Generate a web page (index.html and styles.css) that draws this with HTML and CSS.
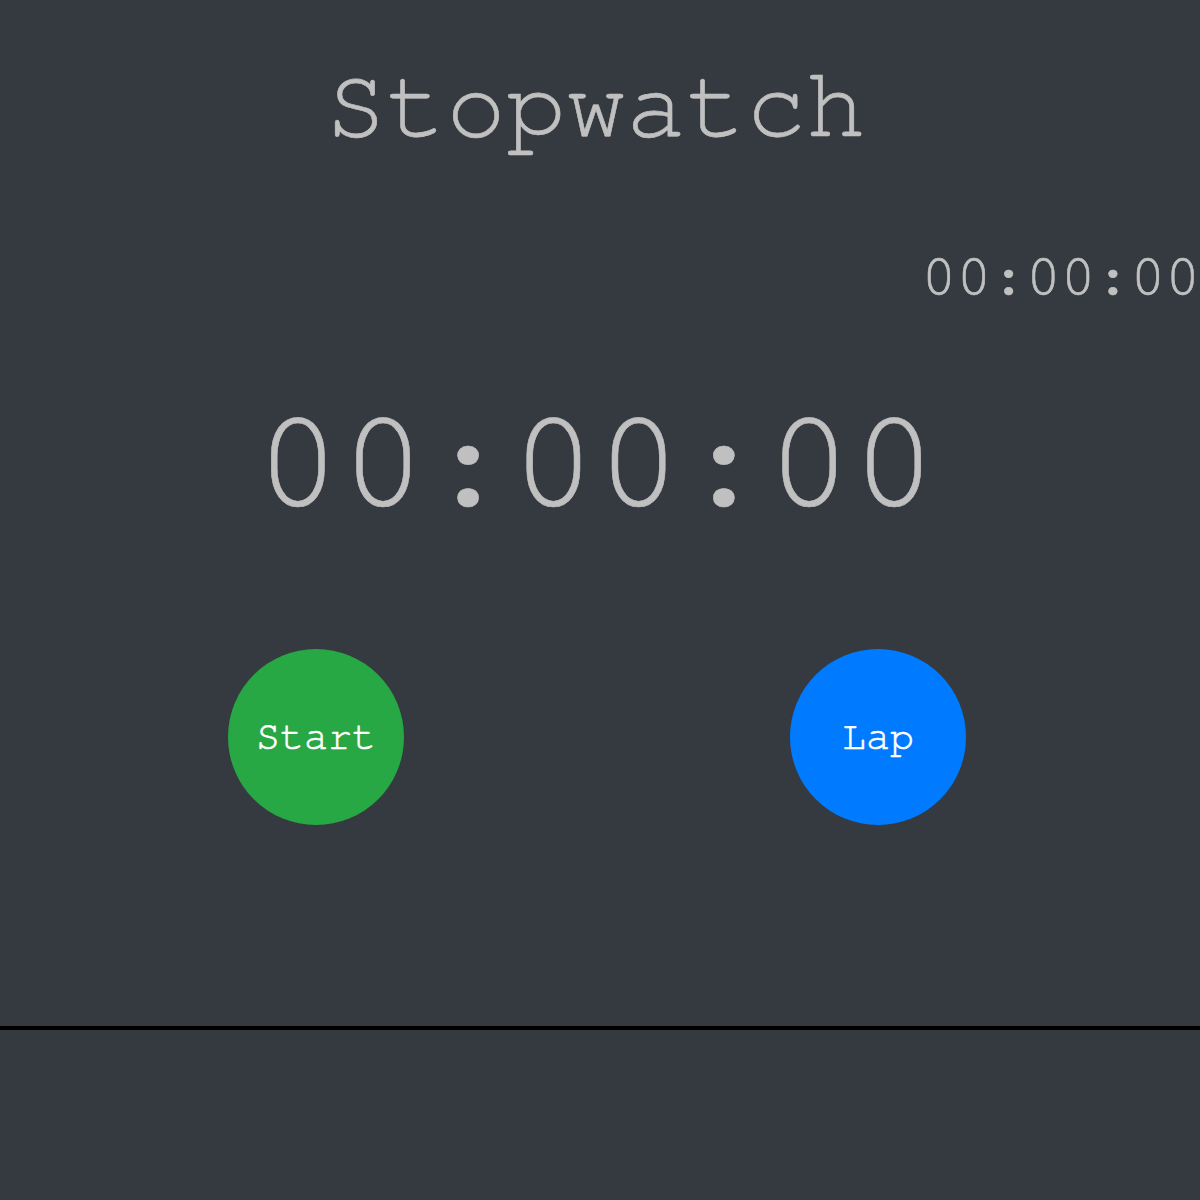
FILE: index.html
```html
<!DOCTYPE html>
<html lang="en">
	<head>
		<meta charset="UTF-8" />
		<meta name="viewport" content="width=device-width, initial-scale=1.0" />
		<title>Stopwatch</title>
		<link rel="stylesheet" href="styles.css">
	</head>
	<body>
		<div class="app">
			<h1 class="title">Stopwatch</h1>

			<div class="lap-time" id="lapTime">00:00:00</div>

			<div class="main-time" id="mainTime">00:00:00</div>

			<div class="controls">
				<button class="btn btn-start" id="startBtn">Start</button>
				<button class="btn btn-lap" id="lapBtn">Lap</button>
			</div>
		</div>

		<div class="laps" id="laps"></div>
	</body>
</html>
```

FILE: styles.css
```css
* {
	margin: 0;
	padding: 0;
	box-sizing: border-box;
}

body {
	font-family: FreeMono, 'Courier New', Courier, monospace;
	background: #343a40;
	color: #c0c0c0;
	min-height: 100vh;
	-webkit-text-stroke: 0.6px currentColor;
}

.app {
	padding-top: 56px;
}

.title {
	font-size: 100px;
	font-weight: 400;
	line-height: 1;
	text-align: center;
	padding-right: 8px;
}

.lap-time {
	font-size: 58px;
	line-height: 1;
	text-align: right;
	margin-top: 92px;
}

.main-time {
	font-size: 142px;
	line-height: 1;
	text-align: center;
	margin-top: 85px;
	padding-right: 8px;
}

.controls {
	display: flex;
	justify-content: center;
	gap: 386px;
	margin-top: 116px;
	padding-right: 6px;
}

.btn {
	width: 176px;
	height: 176px;
	border: none;
	border-radius: 50%;
	color: #fff;
	font-family: inherit;
	font-size: 40px;
	cursor: pointer;
}

.btn-start {
	background: #28a745;
}

.btn-lap {
	background: #007bff;
}

.laps {
	margin-top: 201px;
	border-top: 4px solid #000;
}
```
